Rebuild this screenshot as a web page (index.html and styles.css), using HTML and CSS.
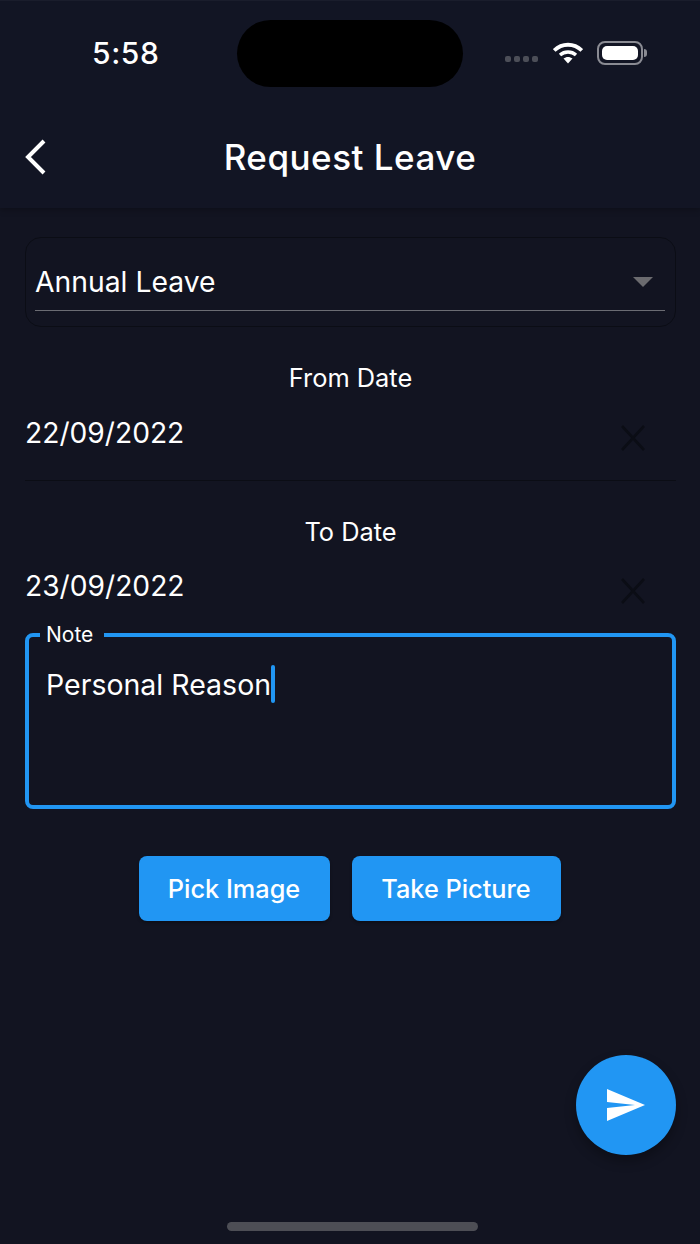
FILE: index.html
```html
<!DOCTYPE html>
<html lang="en">
<head>
    <meta charset="UTF-8">
    <meta name="viewport" content="width=device-width, initial-scale=1.0">
    <title>Request Leave</title>
    <link rel="stylesheet" href="styles.css">
</head>
<body>
    <header class="app-header">
        <div class="status-bar">
            <span class="clock">5:58</span>
            <div class="island"></div>
            <div class="status-icons">
                <div class="signal"><i></i><i></i><i></i><i></i></div>
                <svg class="wifi" width="30" height="24" viewBox="0 0 30 24">
                    <path d="M1.200 9.500C9 1.800 21 1.800 28.800 9.500" fill="none" stroke="#fff" stroke-width="3.800"/>
                    <path d="M7 14C11.500 10 18.500 10 23 14" fill="none" stroke="#fff" stroke-width="3.400"/>
                    <path d="M10.500 17.600C13.300 15.300 16.700 15.300 19.500 17.600L15 22.500Z" fill="#fff"/>
                </svg>
                <div class="battery"><div class="battery-fill"></div></div>
                <div class="battery-cap"></div>
            </div>
        </div>
        <div class="toolbar">
            <svg class="back" width="26" height="38" viewBox="0 0 26 38">
                <path d="M21 3L5 19L21 35" fill="none" stroke="#fff" stroke-width="4"/>
            </svg>
            <h1>Request Leave</h1>
        </div>
    </header>

    <main class="content">
        <div class="dropdown">
            <div class="dropdown-row">
                <span>Annual Leave</span>
                <div class="caret"></div>
            </div>
        </div>

        <p class="date-label first">From Date</p>
        <div class="date-row underlined">
            <span>22/09/2022</span>
            <svg class="clear" width="26" height="26" viewBox="0 0 26 26">
                <path d="M2 1L24 25M24 1L2 25" fill="none" stroke="#0b0d15" stroke-width="2.600"/>
            </svg>
        </div>

        <p class="date-label">To Date</p>
        <div class="date-row">
            <span>23/09/2022</span>
            <svg class="clear" width="26" height="26" viewBox="0 0 26 26">
                <path d="M2 1L24 25M24 1L2 25" fill="none" stroke="#0b0d15" stroke-width="2.600"/>
            </svg>
        </div>

        <fieldset class="note">
            <legend>Note</legend>
            <div class="note-text">Personal Reason<span class="cursor"></span></div>
        </fieldset>

        <div class="actions">
            <button class="btn pick">Pick Image</button>
            <button class="btn take">Take Picture</button>
        </div>
    </main>

    <button class="fab">
        <svg width="40" height="34" viewBox="0 0 40 34">
            <path d="M1 1L39 17L1 33V20L29 17L1 14Z" fill="#fff"/>
        </svg>
    </button>
    <div class="home-bar"></div>
</body>
</html>
```

FILE: styles.css
```css
* {
    box-sizing: border-box;
}

html, body {
    margin: 0;
    padding: 0;
    height: 100%;
    overflow: hidden;
}

body {
    position: relative;
    background-color: #121421;
    color: #fff;
    font-family: 'Inter', 'Roboto', sans-serif;
}

/* Header */
.app-header {
    height: 208px;
    background-color: #121524;
    box-shadow: 0 2px 6px rgba(0, 0, 0, 0.25);
    border-top: 1px solid #1a1d2c;
}

.status-bar {
    height: 105px;
    padding-top: 19px;
    display: flex;
    align-items: flex-start;
}

.clock {
    width: 237px;
    padding: 13px 0 0 92px;
    font-size: 30px;
    line-height: 40px;
    font-weight: 500;
    letter-spacing: 0.6px;
}

.island {
    width: 226px;
    height: 67px;
    background-color: #000;
    border-radius: 34px;
}

.status-icons {
    display: flex;
    align-items: center;
    padding: 21px 0 0 42px;
}

.signal {
    display: flex;
    gap: 3px;
    margin: 12px 15px 0 0;
}

.signal i {
    width: 6px;
    height: 6px;
    border-radius: 2px;
    background-color: #4c4e58;
}

.wifi {
    margin-right: 14px;
}

.battery {
    width: 46px;
    height: 24px;
    padding: 3px;
    border: 2px solid #8a8b93;
    border-radius: 8px;
}

.battery-fill {
    height: 100%;
    background-color: #fff;
    border-radius: 5px;
}

.battery-cap {
    width: 3px;
    height: 8px;
    margin-left: 1px;
    background-color: #8a8b93;
    border-radius: 0 3px 3px 0;
}

.toolbar {
    position: relative;
    height: 102px;
    display: flex;
    align-items: center;
    justify-content: center;
}

.toolbar h1 {
    margin: 0;
    font-size: 35px;
    font-weight: 500;
    letter-spacing: 0.5px;
}

.back {
    position: absolute;
    left: 23px;
    top: 32px;
}

/* Form */
.content {
    padding: 29px 24px 0 25px;
}

.dropdown {
    height: 90px;
    padding: 0 10px 0 9px;
    border: 1px solid #0b0d15;
    border-radius: 16px;
}

.dropdown-row {
    height: 73px;
    padding: 15px 12px 0 0;
    display: flex;
    justify-content: space-between;
    align-items: center;
    font-size: 28.3px;
    border-bottom: 1px solid #6b6c73;
}

.caret {
    width: 0;
    height: 0;
    border-left: 10px solid transparent;
    border-right: 10px solid transparent;
    border-top: 10px solid #6b6b6f;
}

.date-label {
    margin: 31px 0 0;
    text-align: center;
    font-size: 25.4px;
    line-height: 40px;
}

.date-row {
    height: 71px;
    padding: 9px 30px 0 0;
    display: flex;
    justify-content: space-between;
    align-items: flex-start;
    font-size: 28.2px;
    line-height: 50px;
}

.date-row.underlined {
    height: 83px;
    padding-top: 10px;
    border-bottom: 1px solid #0b0d15;
}

.clear {
    margin-top: 17px;
}

/* Note field */
.note {
    margin: 0;
    height: 186px;
    padding: 0 17px;
    border: 4px solid #2196f3;
    border-radius: 8px;
    min-width: 0;
}

.note legend {
    padding: 0 11px 0 6px;
    margin-left: -6px;
    font-size: 21px;
    line-height: 24px;
}

.note-text {
    display: flex;
    align-items: center;
    height: 46px;
    margin-top: 14px;
    font-size: 28.5px;
}

.cursor {
    width: 4px;
    height: 38px;
    background-color: #2196f3;
    border-radius: 2px;
}

/* Buttons */
.actions {
    display: flex;
    justify-content: center;
    gap: 22px;
    margin-top: 47px;
    padding-right: 2px;
}

.btn {
    height: 65px;
    border: 0;
    border-radius: 8px;
    background-color: #2196f3;
    color: #fff;
    font-family: inherit;
    font-size: 25.3px;
    font-weight: 500;
    box-shadow: 0 2px 3px rgba(0, 0, 0, 0.3);
}

.pick {
    width: 191px;
}

.take {
    width: 209px;
}

.fab {
    position: absolute;
    left: 576px;
    top: 1055px;
    width: 100px;
    height: 100px;
    padding: 0;
    border: 0;
    border-radius: 50%;
    background-color: #2196f3;
    display: flex;
    align-items: center;
    justify-content: center;
    box-shadow: 0 6px 12px rgba(0, 0, 0, 0.3);
}

.home-bar {
    position: absolute;
    left: 227px;
    top: 1222px;
    width: 251px;
    height: 9px;
    background-color: #4d4e55;
    border-radius: 5px;
}
```
